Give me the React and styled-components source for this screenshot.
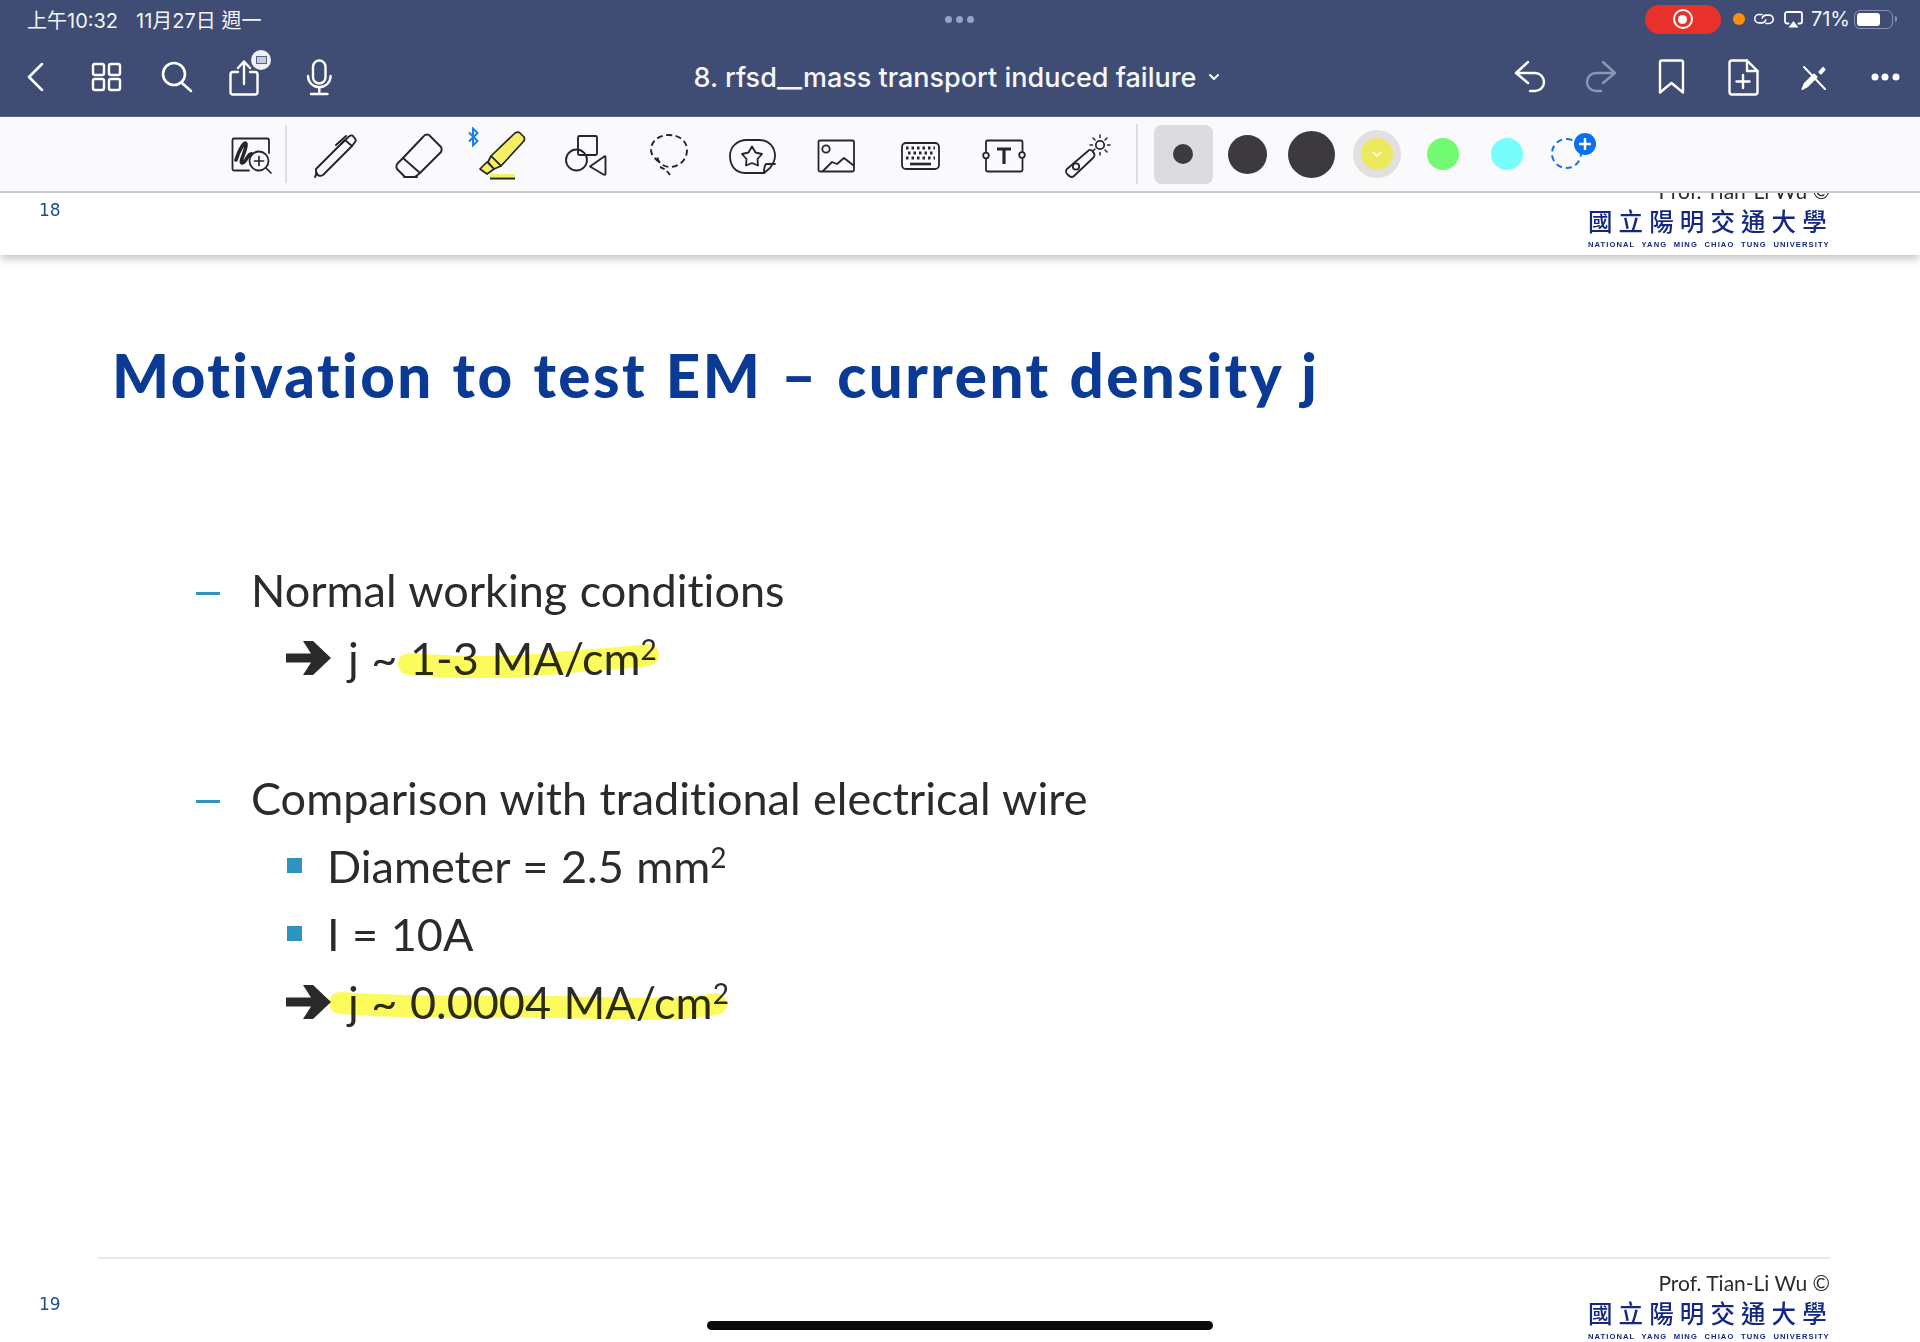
import React from "react";
import styled, { createGlobalStyle } from "styled-components";

const Global = createGlobalStyle`
  html, body { margin: 0; padding: 0; background: #fff; }
  #root { width: 1920px; height: 1342px; }
`;
const Page = styled.div`
  position: relative; width: 1920px; height: 1342px; overflow: hidden;
  display: flex; flex-direction: column; background: #fff;
  font-family: Lato, "Noto Sans", sans-serif;
`;
const Header = styled.header`
  flex: none; height: 116px; background: #3f4c74; color: #fff; z-index: 3;
`;
const StatusRow = styled.div`
  height: 38px; display: grid; grid-template-columns: 1fr auto 1fr; align-items: center;
  font-family: Inter, "Noto Sans CJK TC", sans-serif; font-size: 20px; color: #f4f5f8;
`;
const StatusLeft = styled.div`
  display: flex; gap: 18px; padding-left: 27px; white-space: nowrap;
  font-family: Inter, "Noto Sans CJK TC", sans-serif;
`;
const Dots = styled.div`display: flex; gap: 4px; margin-left: -2px;`;
const Dot = styled.span`width: 7px; height: 7px; border-radius: 50%; background: #98a3c4;`;
const StatusRight = styled.div`
  display: flex; align-items: center; justify-content: flex-end; padding-right: 27px;
`;
const RecPill = styled.div`
  width: 76px; height: 29px; border-radius: 15px; background: #e9302b;
  display: flex; align-items: center; justify-content: center; margin-right: 12px;
`;
const RecRing = styled.div`
  width: 20px; height: 20px; border-radius: 50%; border: 2px solid #fff; box-sizing: border-box;
  display: flex; align-items: center; justify-content: center;
  &::after { content: ""; width: 9px; height: 9px; border-radius: 50%; background: #fff; }
`;
const OrangeDot = styled.span`width: 12px; height: 12px; border-radius: 50%; background: #ff8f0a; margin-right: 8px;`;
const IconGap = styled.span`width: ${p => p.$w}px; flex: none;`;
const Pct = styled.span`margin: 0 4px 0 8px; font-size: 20px;`;
const Battery = styled.div`
  position: relative; width: 39px; height: 19px; border: 1.5px solid #8791b2; border-radius: 6px;
  box-sizing: border-box; padding: 2px; display: flex;
  &::before { content: ""; width: 71%; background: #fff; border-radius: 3px; }
  &::after { content: ""; position: absolute; right: -5px; top: 5px; width: 2px; height: 6px; background: #8791b2; border-radius: 0 2px 2px 0; }
`;
const NavRow = styled.div`
  height: 78px; display: grid; grid-template-columns: 1fr auto 1fr; align-items: center;
`;
const NavGroup = styled.div`display: flex; justify-content: ${p => p.$end ? "flex-end" : "flex-start"};`;
const NavSlot = styled.div`
  position: relative; width: 71px; height: 40px; box-sizing: border-box; padding-right: ${p => p.$shift || 0}px;
  display: flex; align-items: center; justify-content: center;
`;
const DocTitle = styled.div`
  display: flex; align-items: center; gap: 12px; margin-right: 6px;
  font-family: Inter, sans-serif; font-size: 27px; font-weight: 500; color: #f6f7fa; white-space: nowrap;
`;
const Toolbar = styled.div`
  flex: none; height: 77px; background: #faf9fc; border-bottom: 2px solid #c9c8cd; border-top: 1px solid #5a6587;
  box-sizing: border-box; display: flex; align-items: center; padding-left: 219px; z-index: 2;
`;
const ToolSlot = styled.div`
  position: relative; width: ${p => p.$w || 83.7}px; flex: none; height: 60px;
  display: flex; align-items: center; justify-content: center;
  & > svg { margin-top: ${p => p.$drop || 0}px; }
`;
const Divider = styled.div`
  flex: none; width: 2px; height: ${p => p.$h}px; background: #dfdee2; margin: 0 ${p => p.$mr}px 0 ${p => p.$ml}px;
`;
const Tile = styled.div`
  width: 59px; height: 59px; border-radius: 8px; background: #dcdbdf;
  display: flex; align-items: center; justify-content: center;
`;
const Swatch = styled.div`
  width: ${p => p.$size}px; height: ${p => p.$size}px; border-radius: 50%; background: ${p => p.$color};
  display: flex; align-items: center; justify-content: center;
`;
const Ring = styled.div`
  width: 48px; height: 48px; border-radius: 50%; background: #e2e0e0;
  display: flex; align-items: center; justify-content: center;
`;
const DashedCircle = styled.div`
  position: relative; width: 31px; height: 31px; border-radius: 50%; border: 2px dashed #1b74dd; box-sizing: border-box;
  margin-top: -2px; margin-left: -10px;
`;
const PlusBadge = styled.div`
  position: absolute; right: -16px; top: -7px; width: 22px; height: 22px; border-radius: 50%; background: #0a6ff0;
  display: flex; align-items: center; justify-content: center;
`;
const BluetoothMark = styled.svg`
  position: absolute; left: 8px; top: -1px; width: 11px; height: 20px;
`;
const BadgeDisc = styled.div`
  position: absolute; left: 38px; top: -7px; width: 20px; height: 20px; border-radius: 50%; background: #eef0f5;
  display: flex; align-items: center; justify-content: center;
`;
const BadgeScreen = styled.div`
  width: 11px; height: 8px; border: 1.5px solid #5b6686; box-sizing: border-box; background: #c8cddb;
`;
const PrevSlide = styled.div`
  flex: none; height: 62px; overflow: hidden; background: #fff; display: flex; flex-direction: column;
  justify-content: flex-end; padding-bottom: 5px; box-sizing: border-box; box-shadow: 0 4px 8px rgba(0,0,0,.22); z-index: 1;
`;
const Slide = styled.main`
  flex: 1; min-height: 0; display: flex; flex-direction: column; background: #fff;
`;
const SlideTitle = styled.h1`
  margin: 85px 0 0 112px; height: 70px; line-height: 70px; font-size: 60px; font-weight: 900;
  letter-spacing: 2.5px; word-spacing: 2px; font-variant-ligatures: none;
  color: #0b3a94; white-space: nowrap;
`;
const Rows = styled.div`margin-top: 146px; color: #2b2b2b;`;
const Row = styled.div`
  position: relative; height: 68px; display: flex; align-items: center;
  margin: ${p => p.$mt || 0}px 0 0 ${p => p.$left}px;
  font-size: 45px; font-weight: 400; white-space: nowrap; font-variant-ligatures: none; word-spacing: 1px;
`;
const DashMark = styled.span`width: 24px; height: 3px; background: #2e93bf; margin: 7px 31px 0 0; flex: none;`;
const SquareMark = styled.span`width: 15px; height: 15px; background: #2e93bf; margin: -2px 25px 0 1px; flex: none;`;
const ArrowMark = styled.svg`width: 45px; height: 34px; margin-right: 17px; flex: none;`;
const RowText = styled.span`position: relative;`;
const Sup = styled.sup`font-size: 28px; line-height: 0; vertical-align: 15px;`;
const Marker = styled.svg`
  position: absolute; left: ${p => p.$x}px; top: ${p => p.$y}px; mix-blend-mode: multiply; overflow: visible;
`;
const Footer = styled.footer`
  flex: none; margin-top: ${p => p.$auto ? "auto" : 0}; height: 85px; display: flex;
`;
const PageNum = styled.div`
  flex: none; width: 98px; box-sizing: border-box; padding: ${p => p.$top}px 0 0 39px;
  font-family: "DejaVu Sans", sans-serif; font-size: 17px; line-height: 22px; color: #1f4c96;
`;
const FooterBody = styled.div`
  flex: none; width: 1732px; box-sizing: border-box; border-top: 2px solid ${p => p.$rule ? "#e8e8ea" : "transparent"};
  display: flex; flex-direction: column; align-items: flex-end; padding-top: 12px;
`;
const Prof = styled.div`font-size: 21px; line-height: 24px; color: #2b2b2b; white-space: nowrap;`;
const LogoBlock = styled.div`width: 240px; margin-right: 2px;`;
const LogoCn = styled.div`
  font-family: "Noto Sans CJK TC", sans-serif; font-weight: 500; font-size: 24.5px; line-height: 30px;
  letter-spacing: 6.1px; color: #14287f; white-space: nowrap; margin-top: 3px;
`;
const LogoEn = styled.div`
  font-family: "Liberation Sans", sans-serif; font-weight: 700; font-size: 7.6px; line-height: 10px;
  letter-spacing: 1.08px; word-spacing: 3.4px; color: #14287f; white-space: nowrap; margin-top: 4px;
`;
const HomeBar = styled.div`
  position: absolute; left: 707px; top: 1321px; width: 506px; height: 9px; border-radius: 5px; background: #0b0b0b;
`;

const Ic = ({ x, y, w, h, stroke = "#fff", sw = 2.4, children }) => (
  <svg width={w} height={h} viewBox={`${x} ${y} ${w} ${h}`} fill="none" stroke={stroke} strokeWidth={sw} strokeLinecap="round" strokeLinejoin="round">{children}</svg>
);
const tool = "#26262a";

const SlideFooter = ({ num, top, rule, auto }) => (
  <Footer $auto={auto}>
    <PageNum $top={top}>{num}</PageNum>
    <FooterBody $rule={rule}>
      <Prof>Prof. Tian-Li Wu ©</Prof>
      <LogoBlock>
        <LogoCn>國立陽明交通大學</LogoCn>
        <LogoEn>NATIONAL YANG MING CHIAO TUNG UNIVERSITY</LogoEn>
      </LogoBlock>
    </FooterBody>
  </Footer>
);

const Arrow = () => (
  <ArrowMark viewBox="0 0 45 34">
    <path d="M0 12.5H25L17 0H27L45 17L27 34H17L25 21.5H0Z" fill="#2a2a2a" />
  </ArrowMark>
);

export default function App() {
  return (
    <Page>
      <Global />
      <Header>
        <StatusRow>
          <StatusLeft><span>上午10:32</span><span>11月27日 週一</span></StatusLeft>
          <Dots><Dot /><Dot /><Dot /></Dots>
          <StatusRight>
            <RecPill><RecRing /></RecPill>
            <OrangeDot />
            <Ic x={0} y={0} w={22} h={14} sw={1.6}>
              <path d="M9 2.5H6a4.2 4.2 0 0 0 0 8.4h3a4.2 4.2 0 0 0 3.8-3" />
              <path d="M13 11.5h3a4.2 4.2 0 0 0 0-8.4h-3a4.2 4.2 0 0 0-3.8 3" />
            </Ic>
            <IconGap $w={9} />
            <Ic x={0} y={0} w={19} h={17} sw={1.8}>
              <path d="M4.5 12.5H3a2 2 0 0 1-2-2V3a2 2 0 0 1 2-2h13a2 2 0 0 1 2 2v7.5a2 2 0 0 1-2 2h-1.5" />
              <path d="M9.5 10l5 6.5h-10z" fill="#fff" stroke="none" />
            </Ic>
            <Pct>71%</Pct>
            <Battery />
          </StatusRight>
        </StatusRow>
        <NavRow>
          <NavGroup>
            <NavSlot><Ic x={25} y={64} w={18} h={28} sw={2.6}><path d="M40 65L27 78L40 91" /></Ic></NavSlot>
            <NavSlot>
              <Ic x={91} y={63} w={31} h={30}>
                <rect x="93" y="65" width="11" height="11" rx="2" /><rect x="109" y="65" width="11" height="11" rx="2" />
                <rect x="93" y="80" width="11" height="11" rx="2" /><rect x="109" y="80" width="11" height="11" rx="2" />
              </Ic>
            </NavSlot>
            <NavSlot $shift={2}>
              <Ic x={161} y={62} w={32} h={32} sw={2.6}><circle cx="174" cy="75" r="11" /><path d="M182 84L191 92" /></Ic>
            </NavSlot>
            <NavSlot $shift={5}>
              <Ic x={229} y={58} w={34} h={38}>
                <path d="M238 72h-5a2.5 2.5 0 0 0-2.5 2.5V92a2.5 2.5 0 0 0 2.5 2.5h22a2.5 2.5 0 0 0 2.5-2.5V74.5a2.5 2.5 0 0 0-2.5-2.5h-5" />
                <path d="M244 84V62M238 68l6-6.5 6 6.5" />
              </Ic>
              <BadgeDisc><BadgeScreen /></BadgeDisc>
            </NavSlot>
            <NavSlot>
              <Ic x={306} y={59} w={27} h={37}>
                <rect x="313" y="60.5" width="12.5" height="23" rx="6.25" />
                <path d="M308 76a11.3 11.3 0 0 0 22.6 0M319.3 87.5V93M311 94h16.5" />
              </Ic>
            </NavSlot>
          </NavGroup>
          <DocTitle>
            8. rfsd__mass transport induced failure
            <Ic x={0} y={0} w={12} h={8} sw={2}><path d="M2 2l4 4 4-4" /></Ic>
          </DocTitle>
          <NavGroup $end>
            <NavSlot><Ic x={1516} y={62} w={32} h={32}><path d="M1530 63L1518 74L1530 84M1518 74H1537a9 9 0 0 1 0 18H1532" /></Ic></NavSlot>
            <NavSlot><Ic x={1586} y={62} w={32} h={32} stroke="#8c97b6"><path d="M1604 63L1616 74L1604 84M1616 74H1597a9 9 0 0 0 0 18H1602" /></Ic></NavSlot>
            <NavSlot><Ic x={1659} y={60} w={27} h={36}><path d="M1663 61.5h19a2 2 0 0 1 2 2V93.5L1672.5 84 1661 93.5V63.5a2 2 0 0 1 2-2z" /></Ic></NavSlot>
            <NavSlot>
              <Ic x={1728} y={59} w={32} h={37}>
                <path d="M1733 60.5h15l10.5 10.5v21a2.5 2.5 0 0 1-2.5 2.5h-23a2.5 2.5 0 0 1-2.5-2.5V63a2.5 2.5 0 0 1 2.5-2.5z" />
                <path d="M1748 60.5V71h10.5M1744 75v13M1737.5 81.5h13" />
              </Ic>
            </NavSlot>
            <NavSlot>
              <Ic x={1800} y={64} w={28} h={27} sw={2}>
                <path d="M1804 67L1825 89" />
                <path d="M1802.5 89L1804.5 84L1814 74.5L1816.5 77L1807 86.5Z" fill="#fff" />
                <path d="M1819 72L1823 67.5L1825 69.5L1821 74Z" fill="#fff" strokeWidth="1.2" />
              </Ic>
            </NavSlot>
            <NavSlot>
              <Ic x={1868} y={70} w={34} h={14} sw={0}>
                <circle cx="1875" cy="77" r="3.5" fill="#fff" /><circle cx="1885" cy="77" r="3.5" fill="#fff" /><circle cx="1896" cy="77" r="3.5" fill="#fff" />
              </Ic>
            </NavSlot>
          </NavGroup>
        </NavRow>
      </Header>

      <Toolbar>
        <ToolSlot $w={66} $drop={4}>
          <Ic x={232} y={138} w={42} h={40} stroke={tool} sw={1.8}>
            <path d="M258 140.5h10a2 2 0 0 1 2 2V155M250 172.5h-15a1.5 1.5 0 0 1-1.5-1.5V142a1.5 1.5 0 0 1 1.5-1.5h23" />
            <path d="M237 162C240 152 246 142 247 146C248 151 240 164 243 165C246 166 250 154 253 156" strokeWidth="3.6" />
            <circle cx="260" cy="163" r="9.5" fill="#faf9fc" />
            <path d="M260 158.5v9M255.5 163h9M267 170l5 5" strokeWidth="1.7" />
          </Ic>
        </ToolSlot>
        <Divider $h={58} $ml={0} $mr={6} />
        <ToolSlot $drop={4}>
          <Ic x={313} y={134} w={44} h={46} stroke={tool} sw={1.9}>
            <path d="M316 170L345 141L352 147L323 176C320 178 317 176 316 174C316 172 316 171 316 170Z" />
            <path d="M315 178L317 174" />
            <path d="M341 145L349 137.5C351 136 352 136 353 137L355 139.5C356 141 356 142 355 143L352 147M336 146L346 137" />
          </Ic>
        </ToolSlot>
        <ToolSlot $drop={4}>
          <Ic x={395} y={132} w={48} h={48} stroke={tool} sw={1.9}>
            <path d="M403 158L423 137C425 134 427 134 429 135L441 147C442 149 442 150 441 152L420 173Z" />
            <path d="M403 158L398 163C396 165 396 167 397 169L404 176M420 173L415 177M404 177H417" />
          </Ic>
        </ToolSlot>
        <ToolSlot $drop={4}>
          <BluetoothMark viewBox="0 0 11 20" fill="none" stroke="#1a7fe8" strokeWidth="2">
            <path d="M1 5.5L9.5 14 5 18.5V1.5L9.5 6 1 14.5" />
          </BluetoothMark>
          <Ic x={480} y={132} w={47} h={50} stroke={tool} sw={1.7}>
            <path d="M492 157L516 134C518 133 520 133 521 134L525 138C526 140 525 142 524 143L502 167Z" fill="#f5f063" />
            <path d="M492 157L489 163L495 170L502 167Z" fill="#f5f063" />
            <path d="M488 163L481 170L488 175L495 170Z" fill="#f5f063" />
            <path d="M491 176.5H516" stroke="#f5f063" strokeWidth="3" strokeLinecap="butt" />
            <path d="M491 179.5H516" strokeWidth="2" strokeLinecap="butt" />
          </Ic>
        </ToolSlot>
        <ToolSlot $drop={4}>
          <Ic x={564} y={135} w={44} h={44} stroke={tool} sw={1.9}>
            <rect x="578" y="137" width="19" height="19" rx="1.5" />
            <circle cx="576.5" cy="161" r="10.5" />
            <path d="M605.5 158V174.5C605.5 176 604.5 176 603.5 175.5L590 167.5L603.5 158C604.5 157 605.5 157 605.5 158Z" />
          </Ic>
        </ToolSlot>
        <ToolSlot $drop={4}>
          <Ic x={650} y={133} w={42} h={46} stroke={tool} sw={1.9}>
            <path d="M660 162C655 158 652 154 652 150C652 141 660 135 670 135C680 135 688 141 688 150C688 160 680 167 671 167C664 167 658 162 658 155" strokeDasharray="6 3.5" strokeLinecap="butt" />
            <path d="M661 167C666 169 670 172 672 177" strokeDasharray="5 3" strokeLinecap="butt" />
          </Ic>
        </ToolSlot>
        <ToolSlot $drop={4}>
          <Ic x={729} y={136} w={50} h={38} stroke={tool} sw={1.8}>
            <path d="M765 172H746C736 172 731 164 731 155C731 146 738 139 748 139H760C770 139 776 146 776 155C776 160 774 163 771 167Z" />
            <path d="M765 172C765 168 765 165 767 163H776" />
            <path d="M753 145.5L756.5 151.5L763 153L758.5 158L759 164.5L753 162L747 164.5L747.5 158L743 153L749.5 151.5Z" />
          </Ic>
        </ToolSlot>
        <ToolSlot $drop={4}>
          <Ic x={818} y={140} w={39} h={34} stroke={tool} sw={1.8}>
            <rect x="819.5" y="141.5" width="35.5" height="31" rx="1.5" />
            <circle cx="827" cy="150" r="3.7" />
            <path d="M824 172L833 163L838 165L845 159L854 166" />
          </Ic>
        </ToolSlot>
        <ToolSlot $drop={4}>
          <Ic x={901} y={141} w={41} h={30} stroke={tool} sw={1.8}>
            <rect x="903" y="143" width="37" height="26" rx="4" />
            <path d="M907 148H936M909 153H935M907 158H936" strokeWidth="2.8" strokeDasharray="2.5 3" strokeLinecap="butt" />
            <path d="M911 164H932" strokeWidth="2.6" strokeLinecap="butt" />
          </Ic>
        </ToolSlot>
        <ToolSlot $drop={4}>
          <Ic x={982} y={140} w={44} h={34} stroke={tool} sw={1.8}>
            <path d="M986 153V143a1.5 1.5 0 0 1 1.5-1.5H1021a1.5 1.5 0 0 1 1.5 1.5V153M986 160V171a1.5 1.5 0 0 0 1.5 1.5H1021a1.5 1.5 0 0 0 1.5-1.5V160" />
            <circle cx="986" cy="156.5" r="2.8" /><circle cx="1022" cy="156" r="2.8" />
            <path d="M997 150H1011M1004 150V165" strokeWidth="3.2" strokeLinecap="butt" />
          </Ic>
        </ToolSlot>
        <ToolSlot $drop={4}>
          <Ic x={1066} y={131} w={48} h={48} stroke={tool} sw={1.8}>
            <path d="M1069 168L1090 150C1092 148 1094 149 1095 151C1097 153 1097 155 1095 157L1076 175C1074 177 1072 176 1070 174C1068 172 1067 170 1069 168Z" />
            <circle cx="1078" cy="165.5" r="3.2" />
            <circle cx="1102" cy="144" r="4.2" />
            <path d="M1102 134V136.5M1102 151.5V154M1092 144H1094.5M1109.5 144H1112M1095 137L1097 139M1107 149L1109 151M1109 137L1107 139M1095 150L1097 148" strokeWidth="1.5" />
          </Ic>
        </ToolSlot>
        <Divider $h={60} $ml={6.5} $mr={13} />
        <ToolSlot $w={64}><Tile><Swatch $size={20} $color="#3c3a3e" /></Tile></ToolSlot>
        <ToolSlot $w={64}><Swatch $size={39} $color="#3c3a3e" /></ToolSlot>
        <ToolSlot $w={64}><Swatch $size={47} $color="#3c3a3e" /></ToolSlot>
        <ToolSlot $w={68}>
          <Ring>
            <Swatch $size={32} $color="#ecea5c">
              <svg width="10" height="6" viewBox="0 0 10 6" fill="none" stroke="#fff" strokeWidth="1.5"><path d="M1 1l4 4 4-4" /></svg>
            </Swatch>
          </Ring>
        </ToolSlot>
        <ToolSlot $w={64}><Swatch $size={32} $color="#72fb72" /></ToolSlot>
        <ToolSlot $w={64}><Swatch $size={32} $color="#78fdfd" /></ToolSlot>
        <ToolSlot $w={64}>
          <DashedCircle>
            <PlusBadge>
              <svg width="12" height="12" viewBox="0 0 12 12" stroke="#fff" strokeWidth="2.4"><path d="M6 0v12M0 6h12" /></svg>
            </PlusBadge>
          </DashedCircle>
        </ToolSlot>
      </Toolbar>

      <PrevSlide><SlideFooter num="18" top={34} /></PrevSlide>

      <Slide>
        <SlideTitle>Motivation to test EM – current density j</SlideTitle>
        <Rows>
          <Row $left={196}><DashMark /><RowText>Normal working conditions</RowText></Row>
          <Row $left={286}>
            <Arrow /><RowText>j ~ 1-3 MA/cm<Sup>2</Sup></RowText>
            <Marker $x={112} $y={19} width="260" height="32" fill="none">
              <path d="M11 21C60 25 110 25 150 21S220 16 250 12" stroke="#fbfb5e" strokeWidth="22" strokeLinecap="round" />
            </Marker>
          </Row>
          <Row $left={196} $mt={72}><DashMark /><RowText>Comparison with traditional electrical wire</RowText></Row>
          <Row $left={286}><SquareMark /><RowText>Diameter = 2.5 mm<Sup>2</Sup></RowText></Row>
          <Row $left={286}><SquareMark /><RowText>I = 10A</RowText></Row>
          <Row $left={286}>
            <Arrow /><RowText>j ~ 0.0004 MA/cm<Sup>2</Sup></RowText>
            <Marker $x={44} $y={23} width="396" height="29" fill="none">
              <path d="M10 12C80 18 160 14 230 16S340 20 386 13" stroke="#fbfb5e" strokeWidth="22" strokeLinecap="round" />
            </Marker>
          </Row>
        </Rows>
        <SlideFooter num="19" top={36} rule auto />
      </Slide>
      <HomeBar />
    </Page>
  );
}
